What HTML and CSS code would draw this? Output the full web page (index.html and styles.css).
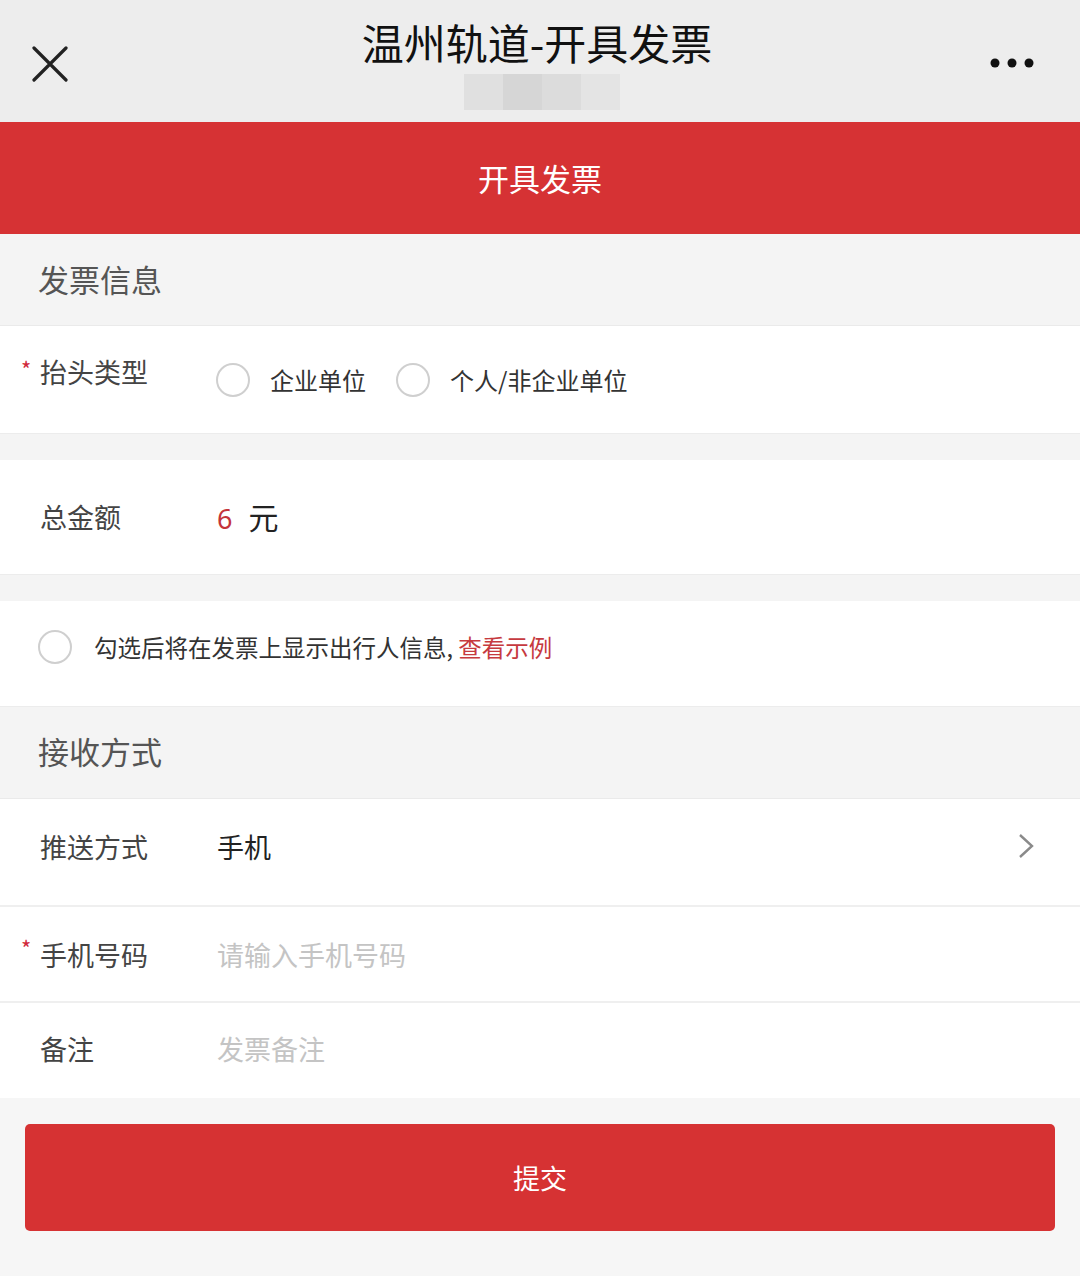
FILE: index.html
```html
<!DOCTYPE html>
<html lang="zh-CN">
<head>
<meta charset="utf-8">
<title>温州轨道-开具发票</title>
<link rel="stylesheet" href="styles.css">
</head>
<body>
<div class="page">
  <header class="nav">
    <svg class="nav-close" width="36" height="36" viewBox="0 0 36 36"><path d="M2 2 L34 34 M34 2 L2 34" stroke="#222" stroke-width="3.2" fill="none" stroke-linecap="round"/></svg>
    <div class="nav-center">
      <div class="nav-title">温州轨道-开具发票</div>
      <div class="nav-sub"></div>
    </div>
    <svg class="nav-more" width="44" height="12" viewBox="0 0 44 12"><circle cx="5" cy="6" r="4.5" fill="#111"/><circle cx="22" cy="6" r="4.5" fill="#111"/><circle cx="39" cy="6" r="4.5" fill="#111"/></svg>
  </header>

  <div class="banner">开具发票</div>

  <div class="section-title sec1">发票信息</div>

  <div class="row row-type">
    <div class="label"><span class="star">*</span>抬头类型</div>
    <div class="radios">
      <span class="radio"></span><span class="radio-text">企业单位</span>
      <span class="radio"></span><span class="radio-text">个人/非企业单位</span>
    </div>
  </div>

  <div class="gap"></div>

  <div class="row row-amount">
    <div class="label">总金额</div>
    <div class="amount"><span class="num">6</span><span class="unit">元</span></div>
  </div>

  <div class="gap"></div>

  <div class="row row-check">
    <span class="radio"></span>
    <span class="check-text">勾选后将在发票上显示出行人信息, <span class="link">查看示例</span></span>
  </div>

  <div class="section-title sec2">接收方式</div>

  <div class="row row-push">
    <div class="label">推送方式</div>
    <div class="value">手机</div>
    <svg class="chev" width="16" height="26" viewBox="0 0 16 26"><path d="M2 2 L14 13 L2 24" stroke="#8a8a8a" stroke-width="2.4" fill="none"/></svg>
  </div>
  <div class="row row-phone">
    <div class="label"><span class="star">*</span>手机号码</div>
    <div class="placeholder">请输入手机号码</div>
  </div>
  <div class="row row-note">
    <div class="label">备注</div>
    <div class="placeholder">发票备注</div>
  </div>

  <div class="footer">
    <div class="submit">提交</div>
  </div>
</div>
</body>
</html>
```

FILE: styles.css
```css
* { box-sizing: border-box; margin: 0; padding: 0; }
html, body { background: #f6f6f6; }
body {
  font-family: "Noto Sans CJK SC", "Noto Sans", sans-serif;
  color: #333;
}
.page { width: 1080px; height: 1276px; display: flex; flex-direction: column; background: #f6f6f6; }

.nav {
  height: 122px;
  background: #ededed;
  display: flex;
  align-items: flex-start;
  position: relative;
  padding: 0 32px;
}
.nav-close { margin-top: 46px; flex: none; }
.nav-center {
  flex: 1;
  display: flex;
  flex-direction: column;
  align-items: center;
  padding-top: 14px;
  padding-left: 16px;
}
.nav-title { font-size: 42px; line-height: 56px; color: #111; letter-spacing: 0; }
.nav-sub {
  width: 156px; height: 36px; margin-top: 4px; margin-left: 10px;
  background: linear-gradient(90deg, #e0e0e0 0 25%, #d6d6d6 25% 50%, #dcdcdc 50% 75%, #e4e4e4 75%);
}
.nav-more { margin-top: 57px; margin-right: 14px; flex: none; }

.banner {
  height: 112px;
  background: #d63234;
  color: #fff;
  font-size: 31px;
  display: flex; align-items: center; justify-content: center;
  padding-bottom: 2px;
}

.section-title {
  background: #f4f4f4;
  color: #555;
  font-size: 31px;
  display: flex; align-items: center;
  padding-left: 38px;
  border-bottom: 1px solid #eaeaea;
}
.sec1 { height: 92px; padding-bottom: 2px; }
.sec2 { height: 93px; padding-bottom: 4px; border-top: 1px solid #ececec; }

.row { background: #fff; display: flex; align-items: center; padding-left: 40px; position: relative; }
.label { width: 177px; font-size: 27px; color: #444; position: relative; flex: none; }
.star { position: absolute; left: -19px; top: -4px; color: #d0283a; font-size: 22px; }

.radio {
  width: 34px; height: 34px; border-radius: 50%;
  border: 2px solid #cfcfcf; display: inline-block; flex: none; background: #fff;
}
.radios { display: flex; align-items: center; margin-top: 8px; margin-left: -1px; }
.radio-text { font-size: 24px; color: #333; margin-left: 20px; margin-right: 30px; }

.row-type { height: 107px; align-items: flex-start; padding-top: 28px; }
.row-type .label { line-height: 36px; }
.gap { height: 27px; background: #f4f4f4; border-top: 1px solid #ececec; }

.row-amount { height: 114px; padding-bottom: 2px; }
.amount { display: flex; align-items: baseline; }
.num { font-family: "Noto Sans", sans-serif; color: #c4343a; font-size: 27px; }
.unit { font-size: 30px; color: #222; margin-left: 16px; }

.row-check { height: 105px; padding-left: 38px; padding-bottom: 14px; }
.check-text { font-size: 23.5px; color: #333; margin-left: 22px; }
.link { color: #c63a3f; }

.row-push { height: 108px; border-bottom: 2px solid #efefef; padding-bottom: 12px; }
.value { font-size: 27px; color: #222; flex: 1; }
.chev { margin-right: 46px; }
.row-phone { height: 96px; border-bottom: 2px solid #efefef; }
.row-note { height: 95px; padding-bottom: 4px; }
.placeholder { font-size: 27px; color: #c4c4c4; }

.footer { flex: 1; padding: 26px 25px 0 25px; background: #f6f6f6; }
.submit {
  height: 107px; border-radius: 5px; background: #d63233; color: #fff;
  font-size: 27px; display: flex; align-items: center; justify-content: center;
}
```
